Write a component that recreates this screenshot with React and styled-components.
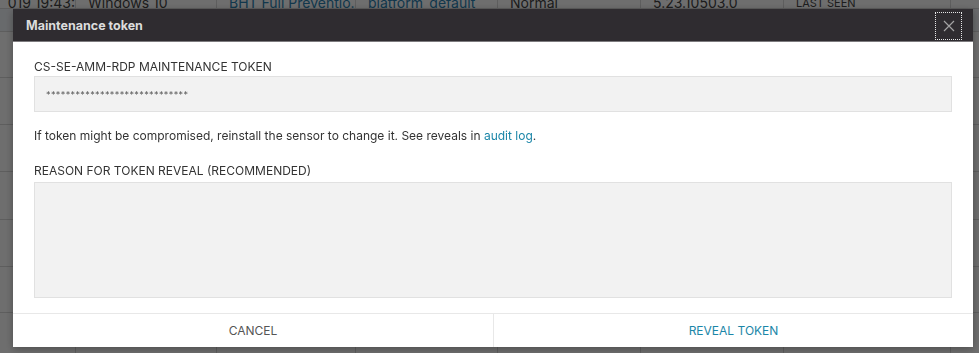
import React from "react";
import styled, { createGlobalStyle } from "styled-components";

const GlobalStyle = createGlobalStyle`
  html, body {
    margin: 0;
    padding: 0;
    width: 979px;
    height: 353px;
    overflow: hidden;
    background: #fff;
    font-family: Inter, "Noto Sans", Arial, sans-serif;
  }
`;

// ---- background table (dimmed behind the modal) ----

const Table = styled.div`
  display: flex;
  flex-direction: column;
  width: 979px;
`;

const Row = styled.div`
  display: grid;
  grid-template-columns: 75px 141px 139px 142px 143px 143px 167px 29px 1fr;
  height: ${(p) => p.h}px;
  overflow: hidden;
  border-bottom: 1px solid #d9d9d9;
  background: ${(p) => (p.tint ? "#f2f6fa" : "#fff")};
  box-sizing: border-box;
`;

const Cell = styled.div`
  display: flex;
  align-items: ${(p) => (p.top ? "flex-start" : p.bottom ? "flex-end" : "center")};
  padding-left: ${(p) => (p.first ? 0 : 12)}px;
  border-left: ${(p) => (p.first ? "none" : "1px solid #d9d9d9")};
  font-size: ${(p) => (p.small ? 11 : 14)}px;
  line-height: 16px;
  margin-top: ${(p) => (p.top ? -5 : 0)}px;
  color: ${(p) => (p.link ? "#2a7fb0" : "#444")};
  white-space: nowrap;
  overflow: hidden;
  justify-content: ${(p) => (p.first ? "flex-end" : "flex-start")};
`;

const Overlay = styled.div`
  position: fixed;
  inset: 0;
  background: rgba(0, 0, 0, 0.57);
`;

// ---- modal ----

const Modal = styled.div`
  position: fixed;
  left: 13px;
  top: 9px;
  width: 960px;
  height: 338px;
  background: #fff;
  display: flex;
  flex-direction: column;
  box-shadow: 0 2px 8px rgba(0, 0, 0, 0.3);
`;

const Header = styled.div`
  height: 32px;
  background: #2f2c30;
  border-bottom: 1px solid #7d7b7e;
  display: flex;
  align-items: center;
  justify-content: space-between;
  padding: 0 11px 0 13px;
`;

const Title = styled.h4`
  margin: 0;
  font-size: 12.5px;
  font-weight: 700;
  color: #dcdcdc;
`;

const CloseButton = styled.button`
  width: 27px;
  height: 28px;
  margin-top: 1px;
  background: transparent;
  border: 1px dotted #e6e6e6;
  display: flex;
  align-items: center;
  justify-content: center;
  padding: 0;
  cursor: pointer;
`;

const Body = styled.div`
  flex: 1;
  padding: 17px 21px 14px 21px;
  display: flex;
  flex-direction: column;
`;

const Label = styled.div`
  font-size: 12px;
  line-height: 16px;
  color: #333;
  margin-top: ${(p) => p.mt || 0}px;
  margin-bottom: ${(p) => p.mb || 0}px;
`;

const TokenBox = styled.div`
  height: 34px;
  background: #f2f2f2;
  border: 1px solid #e1e1e1;
  display: flex;
  align-items: center;
  padding-left: 11px;
  font-size: 9px;
  letter-spacing: 0.4px;
  color: #555;
`;

const Help = styled.p`
  margin: 16px 0 0;
  font-size: 12px;
  line-height: 16px;
  color: #333;
`;

const Link = styled.a`
  color: #1b86a8;
  text-decoration: none;
`;

const TextArea = styled.textarea`
  height: 116px;
  box-sizing: border-box;
  background: #f2f2f2;
  border: 1px solid #e1e1e1;
  resize: none;
  outline: none;
  font-family: inherit;
`;

const Footer = styled.div`
  height: 33px;
  border-top: 1px solid #e8e8e8;
  display: grid;
  grid-template-columns: 480px 1fr;
`;

const FooterButton = styled.button`
  background: #fff;
  border: none;
  border-left: ${(p) => (p.primary ? "1px solid #e8e8e8" : "none")};
  font-family: inherit;
  font-size: 12px;
  color: ${(p) => (p.primary ? "#1b86a8" : "#555")};
  cursor: pointer;
  padding: 0;
`;

// only the cells that peek out round the modal carry text
const rows = [
  { h: 9, top: true, c: ["019 19:43:", "Windows 10", "BHT Full Preventio...", "platform_default", "Normal", "5.23.10503.0", "LAST SEEN", "", "Nov"] },
  { h: 23, tint: true, c: ["", "", "", "", "", "", "", "", ""] },
  { h: 46, c: ["019 19:", "", "", "", "", "", "", "", "Nov"] },
  { h: 47, c: ["019 19:", "", "", "", "", "", "", "", "Soc"] },
  { h: 47, c: ["2019 1", "", "", "", "", "", "", "", "2"] },
  { h: 48, c: ["019 19:", "", "", "", "", "", "", "", "r..."] },
  { h: 47, c: ["2018", "", "", "", "", "", "", "", "a:"] },
  { h: 46, c: ["2018", "", "", "", "", "", "", "", "ir"] },
  { h: 48, c: ["019 19:", "", "Oct 9, 2019 10:15:06", "Nov 13, 2019 12:45:...", "", "", "(1035)", "", ""] },
];

const XIcon = () => (
  <svg width="12" height="12" viewBox="0 0 12 12">
    <path d="M1 1 L11 11 M11 1 L1 11" stroke="#a3a3a3" strokeWidth="1.2" />
  </svg>
);

const App = () => {
  return (
    <>
      <GlobalStyle />
      <Table>
        {rows.map((r, i) => (
          <Row key={i} h={r.h} tint={r.tint}>
            {r.c.map((t, j) => (
              <Cell
                key={j}
                first={j === 0}
                top={r.top}
                small={t === "LAST SEEN"}
                link={(j === 2 || j === 3) && i === 0}
              >
                {t}
              </Cell>
            ))}
          </Row>
        ))}
      </Table>
      <Overlay />
      <Modal>
        <Header>
          <Title>Maintenance token</Title>
          <CloseButton aria-label="Close">
            <XIcon />
          </CloseButton>
        </Header>
        <Body>
          <Label mb={1}>CS-SE-AMM-RDP MAINTENANCE TOKEN</Label>
          <TokenBox>*****************************</TokenBox>
          <Help>
            If token might be compromised, reinstall the sensor to change it. See reveals in{" "}
            <Link href="#">audit log</Link>.
          </Help>
          <Label mt={19} mb={3}>REASON FOR TOKEN REVEAL (RECOMMENDED)</Label>
          <TextArea />
        </Body>
        <Footer>
          <FooterButton>CANCEL</FooterButton>
          <FooterButton primary>REVEAL TOKEN</FooterButton>
        </Footer>
      </Modal>
    </>
  );
};

export default App;
